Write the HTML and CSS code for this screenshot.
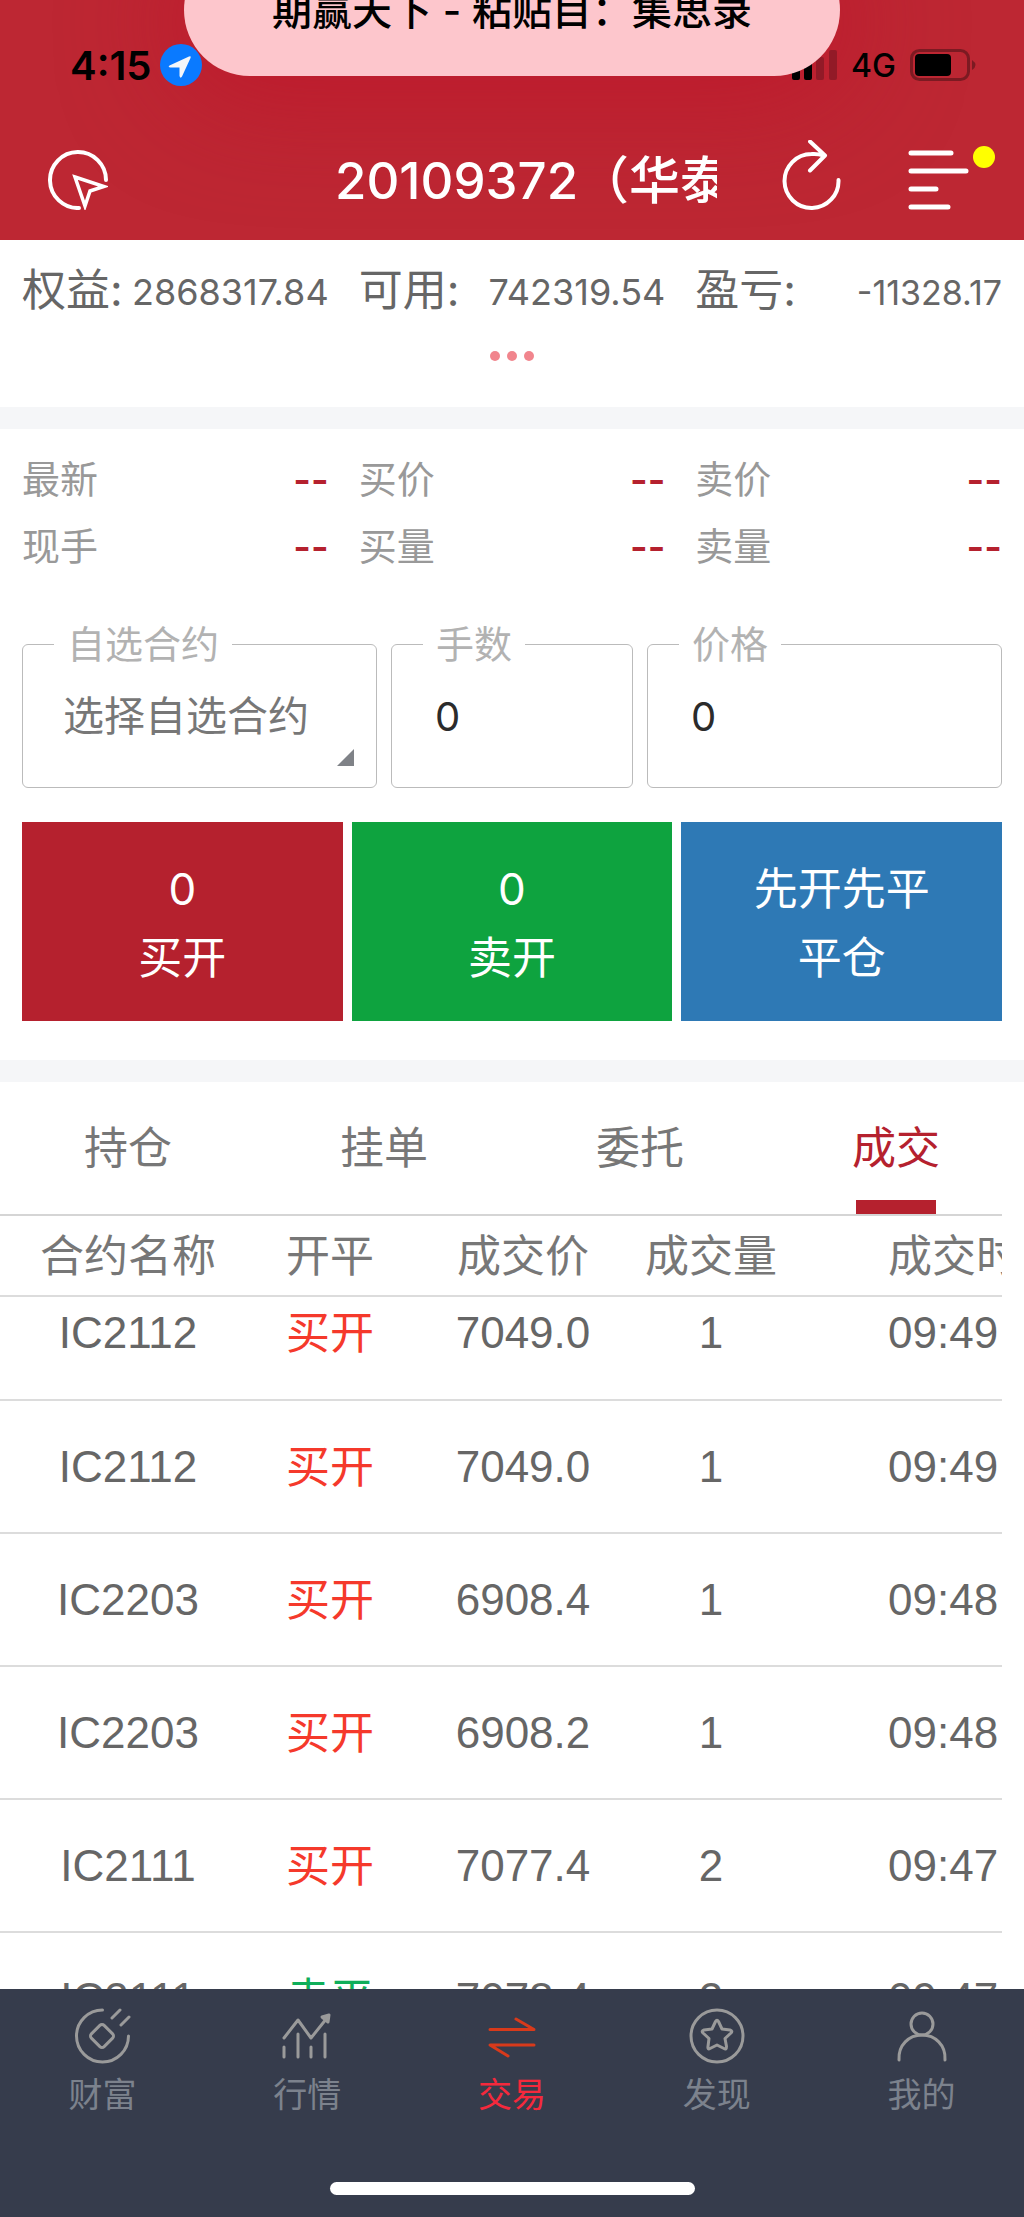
FILE: index.html
```html
<!DOCTYPE html>
<html lang="zh-CN">
<head>
<meta charset="utf-8">
<meta name="viewport" content="width=device-width, initial-scale=1">
<title>交易</title>
<link rel="stylesheet" href="styles.css">
</head>
<body>
<header class="top">
  <div class="status">
    <span class="clock">4:15</span>
    <svg class="location" viewBox="0 0 42 42" aria-hidden="true"><circle cx="21" cy="21" r="21" fill="#0a7aff"/><path d="M9.500 21.500 29 12.500Q31.500 11.500 30.500 14L22 32.500Q20.500 35 19.500 32V23.500H10.500Q7.500 23 9.500 21.500Z" fill="#f4f6fa"/></svg>
    <div class="signals">
      <svg class="bars" viewBox="0 0 45 30" aria-hidden="true"><rect x="0" y="16" width="8" height="14" rx="2"/><rect x="12" y="12" width="8" height="18" rx="2"/><rect x="24" y="7" width="8" height="23" rx="2" fill="#921a27"/><rect x="37" y="0" width="8" height="30" rx="2" fill="#921a27"/></svg>
      <span class="network">4G</span>
      <svg class="battery" viewBox="0 0 66 32" aria-hidden="true"><rect x="1.500" y="1.500" width="57" height="29" rx="8" fill="none" stroke="#7c1a22" stroke-width="3"/><rect x="5" y="5" width="36" height="22" rx="4"/><path d="M62 11q7 5 0 10Z" fill="#7c1a22"/></svg>
    </div>
  </div>
  <div class="titlebar">
    <button class="icon-button" type="button" aria-label="切换账户"><svg width="60" height="60" viewBox="0 0 60 60" fill="none" stroke="#fff" stroke-width="4"><path d="M58 30A28 28 0 1 0 31 58" stroke-linecap="round"/><path d="M27 27 56 36.500 42 41 37 56Z" stroke-width="3.500"/></svg></button>
    <h1 class="title">20109372（华泰</h1>
    <div class="tools">
      <button class="icon-button" type="button" aria-label="刷新"><svg width="60" height="80" viewBox="0 0 60 80" fill="none" stroke="#fff" stroke-width="4" stroke-linecap="round" stroke-linejoin="round"><path d="M56.500 40A27 27 0 1 1 29.500 14Q36 13.500 41 15.500M28 1.500 43 15.500 28 30.500"/></svg></button>
      <button class="icon-button menu" type="button" aria-label="菜单"><svg width="68" height="60" viewBox="0 0 68 60" stroke="#fff" stroke-width="5" stroke-linecap="round"><path d="M7 3H47M7 21H62M7 39H32M7 57H44"/></svg><span class="badge"></span></button>
    </div>
  </div>
  <div class="notice" role="status">期赢天下 - 粘贴目：集思录</div>
</header>

<section class="funds">
  <dl class="triple">
    <div class="pair"><dt>权益:</dt><dd>2868317.84</dd></div>
    <div class="pair"><dt>可用:</dt><dd>742319.54</dd></div>
    <div class="pair"><dt>盈亏:</dt><dd class="small">-11328.17</dd></div>
  </dl>
  <button class="more" type="button" aria-label="更多"><i></i><i></i><i></i></button>
</section>

<form class="order">
  <dl class="triple quote">
    <div class="pair"><dt>最新</dt><dd>--</dd></div>
    <div class="pair"><dt>买价</dt><dd>--</dd></div>
    <div class="pair"><dt>卖价</dt><dd>--</dd></div>
    <div class="pair"><dt>现手</dt><dd>--</dd></div>
    <div class="pair"><dt>买量</dt><dd>--</dd></div>
    <div class="pair"><dt>卖量</dt><dd>--</dd></div>
  </dl>
  <div class="fields">
    <fieldset class="field picker">
      <legend><label for="contract">自选合约</label></legend>
      <select id="contract"><option>选择自选合约</option></select>
    </fieldset>
    <fieldset class="field">
      <legend><label for="lots">手数</label></legend>
      <input id="lots" type="text" inputmode="numeric" value="0">
    </fieldset>
    <fieldset class="field">
      <legend><label for="price">价格</label></legend>
      <input id="price" type="text" inputmode="decimal" value="0">
    </fieldset>
  </div>
  <div class="actions">
    <button class="action buy" type="button"><span>0</span><span>买开</span></button>
    <button class="action sell" type="button"><span>0</span><span>卖开</span></button>
    <button class="action close" type="button"><span>先开先平</span><span>平仓</span></button>
  </div>
</form>

<section class="records">
  <nav class="tabs">
    <a href="#positions">持仓</a>
    <a href="#pending">挂单</a>
    <a href="#orders">委托</a>
    <a class="current" href="#deals">成交</a>
  </nav>
  <div class="scroller">
    <table class="deals">
      <thead><tr><th class="c-name">合约名称</th><th class="c-side">开平</th><th class="c-price">成交价</th><th class="c-lots">成交量</th><th class="c-time">成交时间</th></tr></thead>
      <tbody>
        <tr><td>IC2112</td><td class="up">买开</td><td>7049.0</td><td>1</td><td>09:49</td></tr>
        <tr><td>IC2112</td><td class="up">买开</td><td>7049.0</td><td>1</td><td>09:49</td></tr>
        <tr><td>IC2203</td><td class="up">买开</td><td>6908.4</td><td>1</td><td>09:48</td></tr>
        <tr><td>IC2203</td><td class="up">买开</td><td>6908.2</td><td>1</td><td>09:48</td></tr>
        <tr><td>IC2111</td><td class="up">买开</td><td>7077.4</td><td>2</td><td>09:47</td></tr>
        <tr><td>IC2111</td><td class="down">卖平</td><td>7078.4</td><td>2</td><td>09:47</td></tr>
      </tbody>
    </table>
  </div>
</section>

<footer class="dock">
  <nav class="dock-items">
    <a href="#wealth"><svg viewBox="0 0 60 60"><path d="M30.500 4A26 26 0 1 0 56.500 30M40 12 48 4M49 19 57 11"/><rect x="21" y="21" width="18" height="18" rx="3" transform="rotate(45 30 30)"/></svg>财富</a>
    <a href="#market"><svg viewBox="0 0 60 60"><path d="M7 32 21 14 34 32 50 12M7 41V51M21 28V51M34 41V51M48 28V51"/><path d="M45 11 52 9 51 16Z" fill="currentColor"/></svg>行情</a>
    <a class="current" href="#trade"><svg viewBox="0 0 60 60"><path d="M8 23.500H52L34 13M52 39H8L26 50"/></svg>交易</a>
    <a href="#discover"><svg viewBox="0 0 60 60"><circle cx="30" cy="30" r="26"/><path d="M28.500 15.500Q30 13 31.500 15.500L35 23 43 24Q46 25 44 27L38 32.500 39.500 40.500Q39.500 44 37 42.500L30 39 23 42.500Q20.500 44 21 40.500L22 32.500 16 27Q14 25 17 24L25 23Z"/></svg>发现</a>
    <a href="#me"><svg viewBox="0 0 60 60"><circle cx="30" cy="18" r="11"/><path d="M7 54C6 39 17 29 30 29S54 39 53 54"/></svg>我的</a>
  </nav>
  <div class="home-bar"></div>
</footer>
</body>
</html>
```
FILE: styles.css
```css
* {
  box-sizing: border-box;
}

body {
  margin: 0;
  height: 100vh;
  display: flex;
  flex-direction: column;
  overflow: hidden;
  background: #fff;
  color: #666;
  font-family: Inter, "Noto Sans CJK SC", sans-serif;
  font-size: 44px;
}

button,
input,
select {
  font: inherit;
  color: inherit;
  border: 0;
  padding: 0;
  margin: 0;
  background: none;
}

a {
  color: inherit;
  text-decoration: none;
}

svg {
  display: block;
}

dl,
dd,
h1 {
  margin: 0;
}

/* Header */

.top {
  position: relative;
  isolation: isolate;
  flex: none;
  height: 240px;
  overflow: hidden;
  background: #bd2733;
  color: #fff;
}

.status {
  display: flex;
  align-items: center;
  height: 120px;
  padding: 10px 48px 0 70px;
  color: #000;
}

.clock {
  font-size: 40px;
  font-weight: 600;
}

.location {
  width: 42px;
  height: 42px;
  margin-left: 9px;
}

.signals {
  display: flex;
  align-items: center;
  gap: 14px;
  margin-left: auto;
}

.bars {
  width: 45px;
  height: 30px;
}

.network {
  font-size: 32px;
  font-weight: 500;
}

.battery {
  width: 66px;
  height: 32px;
}

.titlebar {
  display: grid;
  grid-template-columns: 1fr 410px 1fr;
  align-items: center;
  height: 120px;
}

.titlebar > .icon-button {
  justify-self: start;
  margin-left: 48px;
}

.title {
  padding: 2px 0 0 28px;
  overflow: hidden;
  white-space: nowrap;
  font-size: 51px;
  font-weight: 500;
  line-height: 80px;
}

.tools {
  display: flex;
  justify-content: flex-end;
  align-items: center;
  gap: 62px;
  padding-right: 52px;
}

.menu {
  position: relative;
}

.badge {
  position: absolute;
  top: -4px;
  right: -23px;
  width: 22px;
  height: 22px;
  border-radius: 50%;
  background: #ff0;
}

.notice,
.top::before {
  position: absolute;
  top: -56px;
  left: 18%;
  right: 18%;
  height: 132px;
  border-radius: 66px;
}

/* Glow of the notice, kept beneath the status icons */
.top::before {
  content: "";
  z-index: -1;
  box-shadow: 0 12px 110px 10px rgba(190, 16, 40, .6);
}

.notice {
  background: #fdc6cc;
  color: #000;
  font-size: 40px;
  font-weight: 500;
  line-height: 134px;
  text-align: center;
  white-space: nowrap;
}

/* Account summary */

.triple {
  display: grid;
  grid-template-columns: repeat(3, 1fr);
  column-gap: 30px;
  padding: 0 22px;
}

.pair {
  display: flex;
  justify-content: space-between;
  align-items: center;
  white-space: nowrap;
}

.pair dt {
  padding-bottom: 6px;
}

.funds {
  flex: none;
  height: 189px;
  padding-top: 16px;
  border-bottom: 22px solid #f5f6f8;
}

.funds .pair {
  height: 68px;
}

.funds dd {
  padding-top: 4px;
  font-size: 36px;
}

.funds dd.small {
  font-size: 34px;
}

.more {
  display: flex;
  gap: 7px;
  margin: 27px auto 0;
}

.more i {
  width: 10px;
  height: 10px;
  border-radius: 50%;
  background: #f1858d;
}

/* Order form */

.order {
  flex: none;
  padding-top: 17px;
  border-bottom: 22px solid #f5f6f8;
}

.quote {
  color: #999;
  font-size: 38px;
}

.quote .pair {
  height: 67px;
}

.quote dd {
  color: #b5212e;
  font-weight: 600;
}

.fields {
  display: grid;
  grid-template-columns: 355fr 242fr 355fr;
  gap: 14px;
  padding: 45px 22px 0;
}

.field {
  position: relative;
  min-width: 0;
  height: 163px;
  margin: 0;
  padding: 0 0 0 43px;
  border: 1px solid #bbb;
  border-radius: 6px;
}

.field legend {
  margin-left: -12px;
  padding: 0 13px;
  color: #b2b2b2;
  font-size: 38px;
  line-height: 38px;
}

.field input,
.field select {
  width: 100%;
  height: 106px;
  color: #2b2b2b;
  font-size: 40px;
  outline: 0;
}

.field select {
  appearance: none;
  color: #777;
  font-size: 41px;
}

.picker {
  padding-left: 40px;
}

.picker legend {
  margin-left: -9px;
}

.picker::after {
  content: "";
  position: absolute;
  right: 22px;
  bottom: 21px;
  border-bottom: 17px solid #7f8287;
  border-left: 17px solid transparent;
}

.actions {
  display: grid;
  grid-template-columns: repeat(3, 1fr);
  gap: 9px;
  padding: 34px 22px 39px;
}

.action {
  display: flex;
  flex-direction: column;
  align-items: center;
  justify-content: center;
  height: 199px;
  padding-top: 4px;
  color: #fff;
  line-height: 69px;
}

.buy {
  background: #b5212e;
}

.sell {
  background: #0ea33f;
}

.close {
  background: #2e79b5;
}

/* Records */

.records {
  display: flex;
  flex: 1;
  flex-direction: column;
  min-height: 0;
  color: #777;
}

.tabs {
  display: grid;
  flex: none;
  grid-template-columns: repeat(4, 1fr);
  height: 132px;
  line-height: 132px;
  text-align: center;
}

.tabs .current {
  display: flex;
  flex-direction: column;
  align-items: center;
  color: #b5212e;
}

.tabs .current::after {
  content: "";
  width: 80px;
  height: 14px;
  margin-top: -14px;
  background: #b5212e;
}

.scroller {
  flex: 1;
  min-height: 0;
  margin-right: 22px;
  overflow: hidden;
  border-top: 2px solid #d5d5d5;
}

.deals {
  width: 1064px;
  table-layout: fixed;
  border-collapse: collapse;
  text-align: center;
  white-space: nowrap;
}

.deals th,
.deals td {
  height: 133px;
  padding: 0;
  border-bottom: 2px solid #dcdcdc;
}

.deals th {
  height: 80px;
  padding-bottom: 6px;
  font-weight: 400;
}

.deals td {
  color: #666;
  font-family: "Liberation Sans", "Noto Sans CJK SC", sans-serif;
}

.deals .up,
.deals .down {
  padding-bottom: 6px;
}

.deals tbody tr:first-child td {
  height: 104px;
  padding-bottom: 31px;
}

.deals tbody tr:first-child .up {
  padding-bottom: 37px;
}

.deals td:last-child {
  padding-left: 2px;
  text-align: left;
}

.c-name {
  width: 256px;
}

.c-side {
  width: 148px;
}

.c-price {
  width: 238px;
}

.c-lots {
  width: 138px;
}

.deals .c-time,
.deals td:last-child {
  padding-left: 108px;
  text-align: left;
}

.deals .up {
  color: #f5392b;
}

.deals .down {
  color: #0fae5a;
}

/* Bottom bar */

.dock {
  flex: none;
  height: 228px;
  background: #363c4c;
  color: #7c828d;
}

.dock-items {
  display: grid;
  grid-template-columns: repeat(5, 1fr);
  height: 193px;
  padding-top: 17px;
  font-size: 34px;
  line-height: 58px;
  text-align: center;
}

.dock-items svg {
  width: 60px;
  height: 60px;
  margin: 0 auto;
  fill: none;
  stroke: currentColor;
  stroke-width: 3;
  stroke-linecap: round;
  stroke-linejoin: round;
  color: #9a9a9a;
}

.dock-items .current {
  color: #f5293c;
}

.dock-items .current svg {
  color: #d83a1b;
}

.home-bar {
  width: 365px;
  height: 13px;
  margin: 0 auto;
  border-radius: 7px;
  background: #fff;
}
```
